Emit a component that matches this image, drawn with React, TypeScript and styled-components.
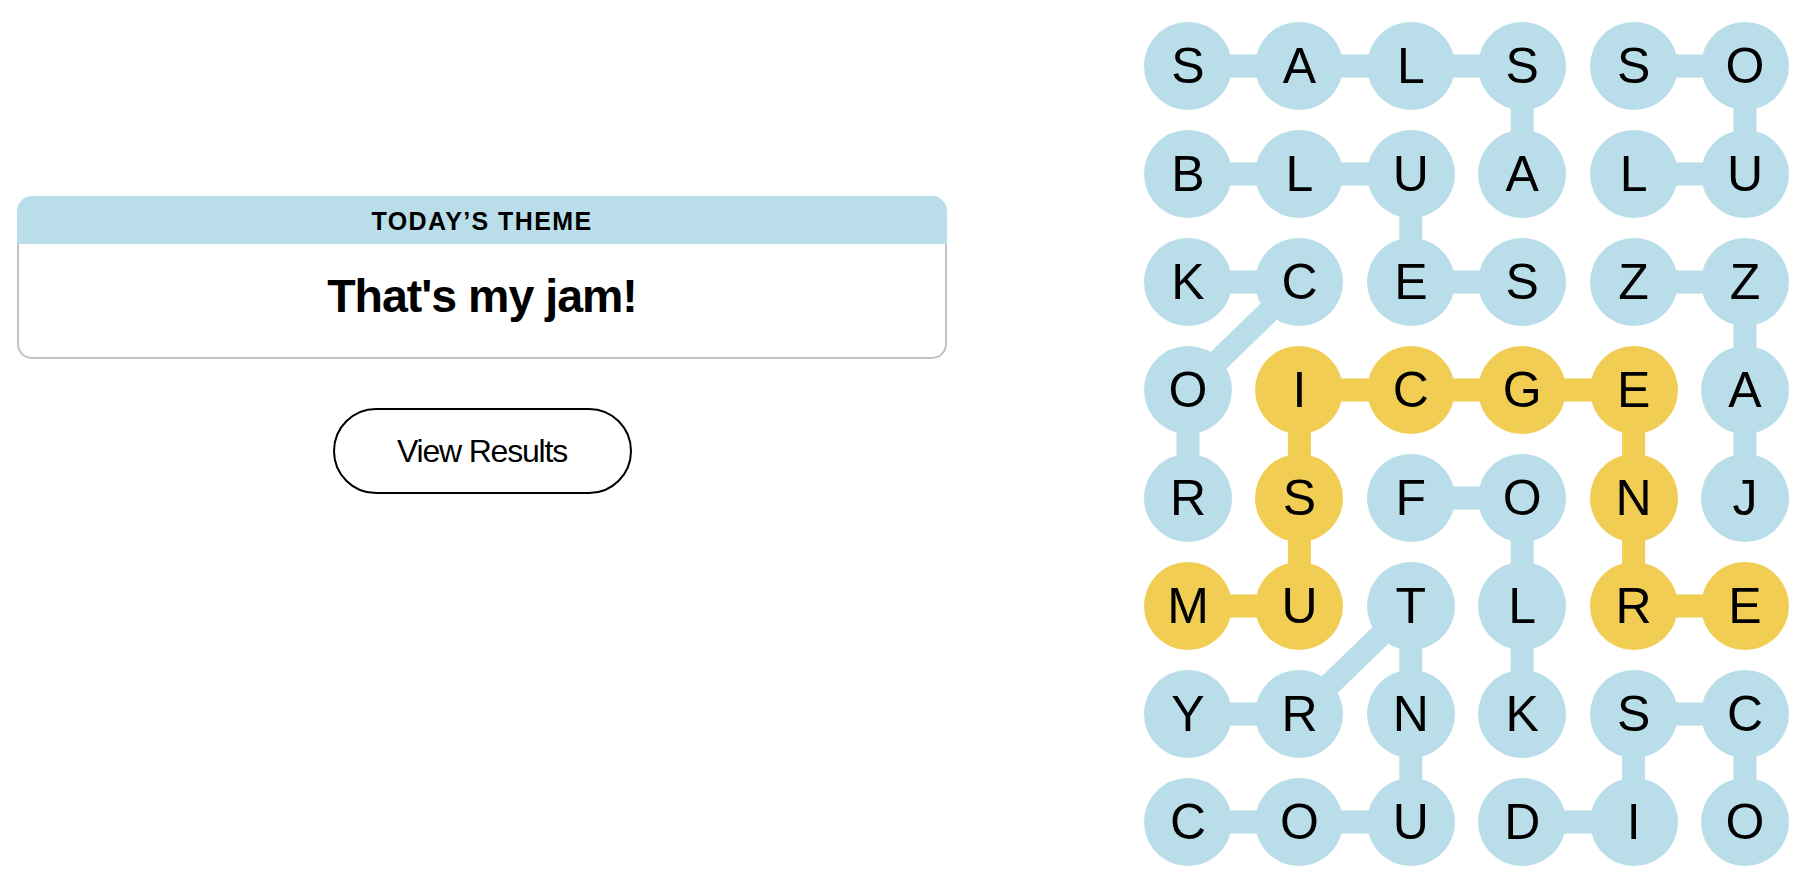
import styled, { createGlobalStyle } from "styled-components";

const GlobalStyle = createGlobalStyle`
    html, body {
        margin: 0;
        padding: 0;
        background: #ffffff;
    }
    body {
        font-family: "Liberation Sans", Arial, sans-serif;
        color: #000000;
    }
`;

const BLUE = "#b9deea";
const YELLOW = "#f1cd53";

const TILE = 88;
const COL_STEP = 111.4;
const ROW_STEP = 108;

const LETTERS = [
    "SALSSO",
    "BLUALU",
    "KCESZZ",
    "OICGEA",
    "RSFONJ",
    "MUTLRE",
    "YRNKSC",
    "COUDIO",
];

type Cell = [number, number];

const WORDS: { cells: Cell[]; spangram?: boolean }[] = [
    { cells: [[0, 0], [0, 1], [0, 2], [0, 3], [1, 3]] },
    { cells: [[0, 4], [0, 5], [1, 5], [1, 4]] },
    { cells: [[1, 0], [1, 1], [1, 2], [2, 2], [2, 3]] },
    { cells: [[4, 0], [3, 0], [2, 1], [2, 0]] },
    { cells: [[4, 5], [3, 5], [2, 5], [2, 4]] },
    { cells: [[4, 2], [4, 3], [5, 3], [6, 3]] },
    { cells: [[7, 0], [7, 1], [7, 2], [6, 2], [5, 2], [6, 1], [6, 0]] },
    { cells: [[7, 3], [7, 4], [6, 4], [6, 5], [7, 5]] },
    {
        cells: [[5, 0], [5, 1], [4, 1], [3, 1], [3, 2], [3, 3], [3, 4], [4, 4], [5, 4], [5, 5]],
        spangram: true,
    },
];

const spangramCells = new Set(
    WORDS.filter((w) => w.spangram).flatMap((w) => w.cells.map(([r, c]) => `${r}-${c}`)),
);

const Page = styled.main`
    display: flex;
    justify-content: space-between;
    align-items: flex-start;
    padding: 22px 31px 0 17px;
    min-height: 890px;
    box-sizing: border-box;
`;

const Sidebar = styled.section`
    width: 930px;
    margin-top: 174px;
    display: flex;
    flex-direction: column;
    align-items: center;
    gap: 49px;
`;

const ThemeCard = styled.div`
    width: 100%;
    display: flex;
    flex-direction: column;
`;

const ThemeHeader = styled.div`
    background: ${BLUE};
    border-radius: 15px 15px 0 0;
    padding-top: 2px;
    line-height: 46px;
    text-align: center;
    font-size: 25px;
    font-weight: 700;
    letter-spacing: 1.4px;
    text-transform: uppercase;
`;

const ThemeBody = styled.div`
    border: 2px solid #c2c2c2;
    border-top: none;
    border-radius: 0 0 15px 15px;
    padding: 25px 0 34px;
    text-align: center;
    font-size: 46.5px;
    line-height: 54px;
    font-weight: 700;
    letter-spacing: -1px;
`;

const ResultsButton = styled.button`
    width: 299px;
    height: 86px;
    display: flex;
    align-items: center;
    justify-content: center;
    background: #ffffff;
    border: 2px solid #000000;
    border-radius: 43px;
    font-family: "Liberation Sans", Arial, sans-serif;
    font-size: 32px;
    line-height: 1;
    letter-spacing: -1.2px;
    color: #000000;
    cursor: pointer;
`;

const Board = styled.div`
    position: relative;
    display: grid;
    grid-template-columns: repeat(6, ${TILE}px);
    grid-auto-rows: ${TILE}px;
    column-gap: ${COL_STEP - TILE}px;
    row-gap: ${ROW_STEP - TILE}px;
`;

const Links = styled.svg`
    position: absolute;
    inset: 0;
    width: 100%;
    height: 100%;
    overflow: visible;
`;

const Tile = styled.div<{ $spangram: boolean }>`
    position: relative;
    width: ${TILE}px;
    height: ${TILE}px;
    border-radius: 50%;
    background: ${(props) => (props.$spangram ? YELLOW : BLUE)};
    display: flex;
    align-items: center;
    justify-content: center;
    font-size: 50px;
    line-height: 1;
    font-weight: 400;
    user-select: none;
`;

const center = ([r, c]: Cell) => ({
    x: TILE / 2 + c * COL_STEP,
    y: TILE / 2 + r * ROW_STEP,
});

const App = () => {
    return (
        <>
            <GlobalStyle />
            <Page>
                <Sidebar>
                    <ThemeCard>
                        <ThemeHeader>Today’s Theme</ThemeHeader>
                        <ThemeBody>That's my jam!</ThemeBody>
                    </ThemeCard>
                    <ResultsButton type="button">View Results</ResultsButton>
                </Sidebar>

                <Board>
                    <Links>
                        {WORDS.map((word, wi) =>
                            word.cells.slice(1).map((cell, i) => {
                                const a = center(word.cells[i]);
                                const b = center(cell);
                                return (
                                    <line
                                        key={`${wi}-${i}`}
                                        x1={a.x}
                                        y1={a.y}
                                        x2={b.x}
                                        y2={b.y}
                                        stroke={word.spangram ? YELLOW : BLUE}
                                        strokeWidth={23}
                                    />
                                );
                            }),
                        )}
                    </Links>
                    {LETTERS.map((row, r) =>
                        row.split("").map((letter, c) => (
                            <Tile key={`${r}-${c}`} $spangram={spangramCells.has(`${r}-${c}`)}>
                                {letter}
                            </Tile>
                        )),
                    )}
                </Board>
            </Page>
        </>
    );
};

export default App;
